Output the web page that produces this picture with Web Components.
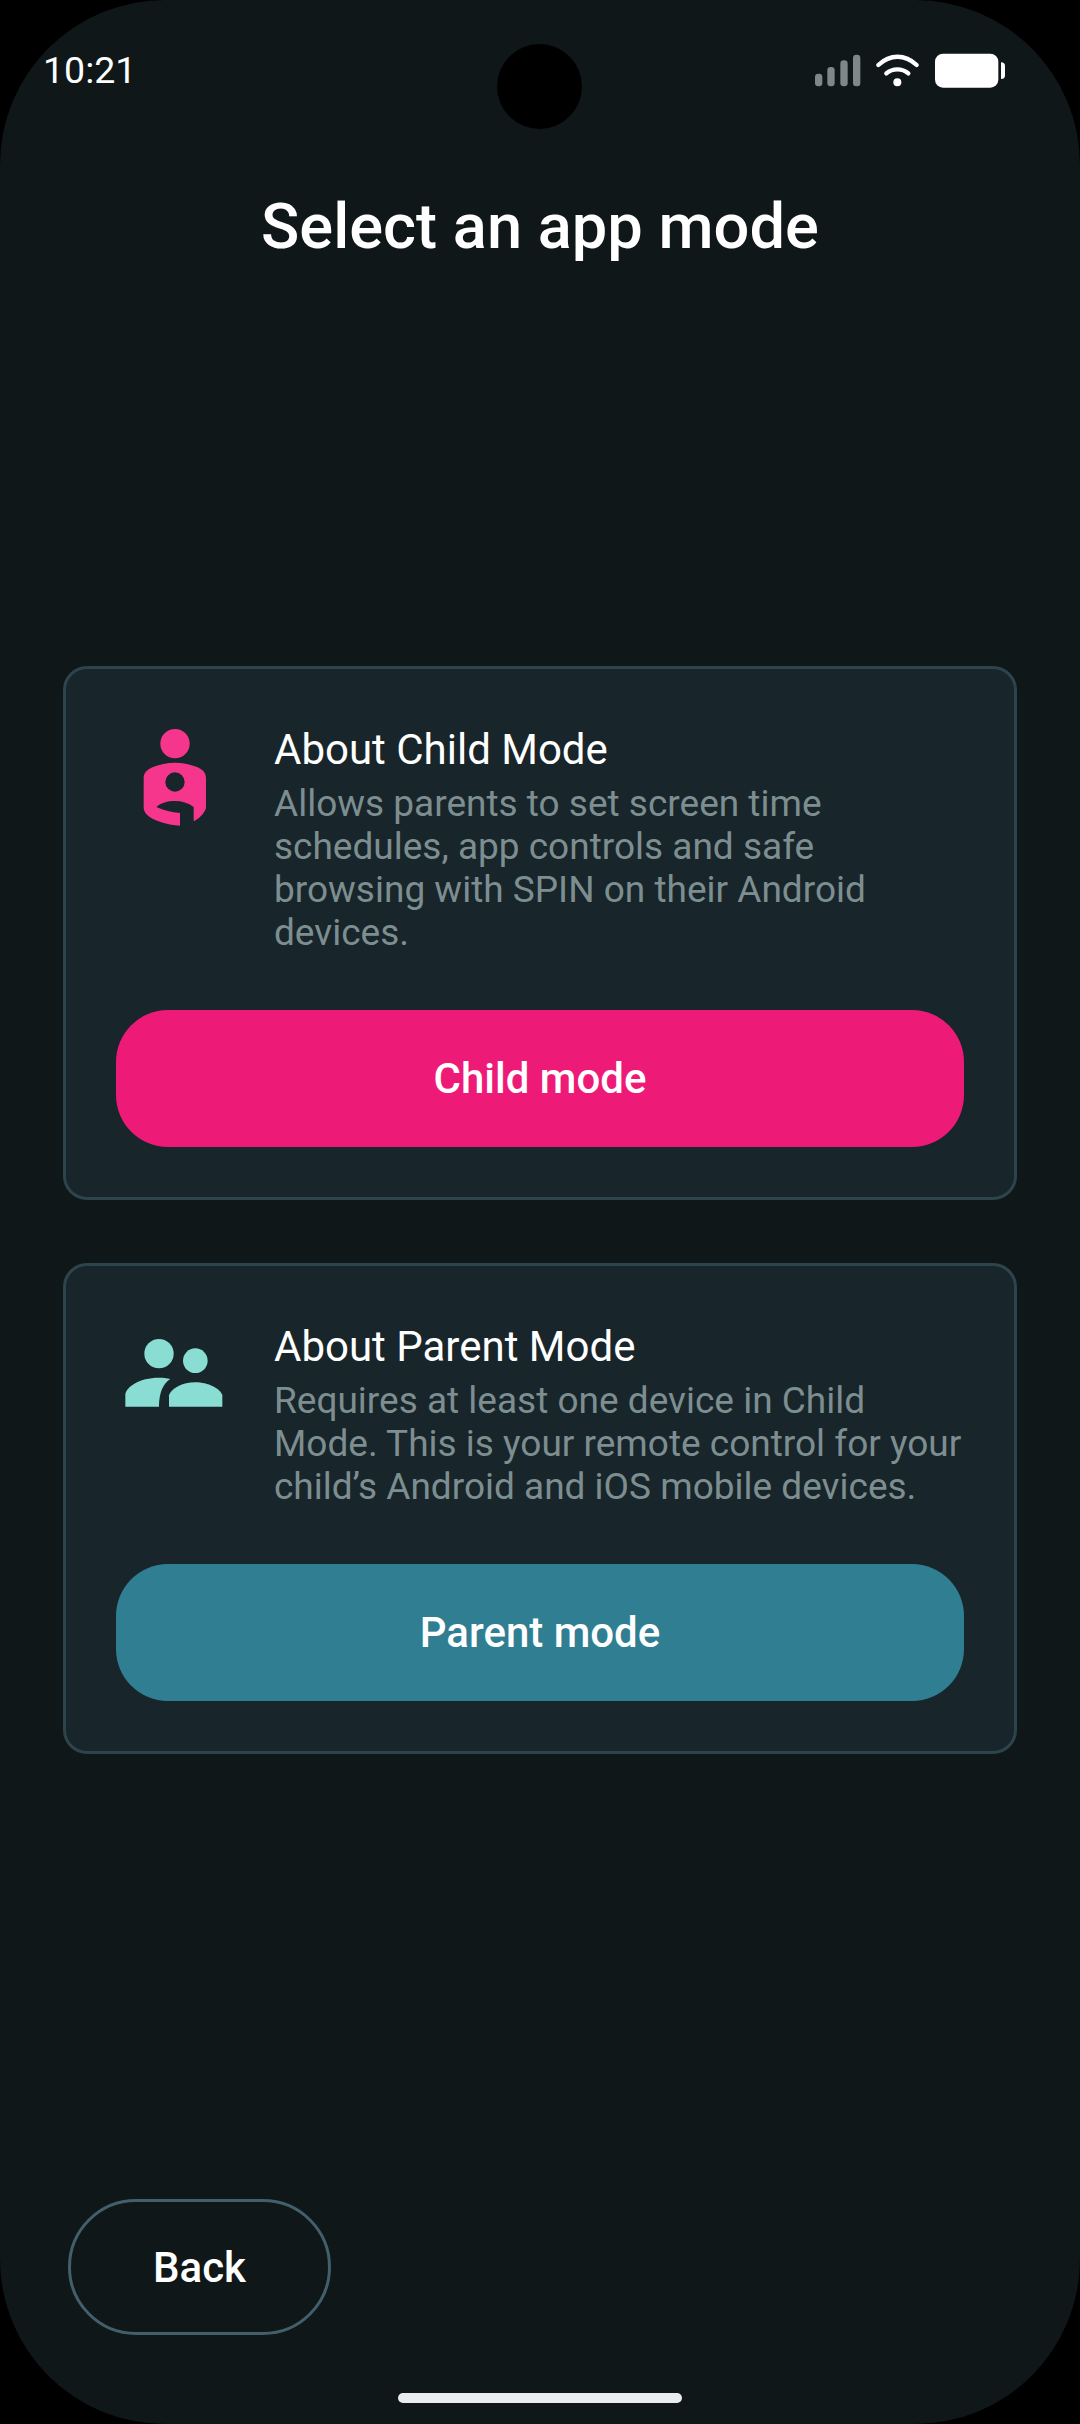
<!DOCTYPE html>
<html>
<head>
<meta charset="utf-8">
<title>Select an app mode</title>
<style>
  html, body { margin: 0; padding: 0; background: #000; }
  body { width: 1080px; height: 2424px; overflow: hidden; font-family: Roboto, "Liberation Sans", sans-serif; }
</style>
</head>
<body>
<mode-screen>
  <status-bar slot="status" time="10:21"></status-bar>
  <mode-card accent="#ee1a77" title-text="About Child Mode" action="Child mode" icon-top="2">
    <svg slot="icon" width="66.67" height="100" viewBox="270 230 200 300">
      <circle cx="372" cy="280" r="44" fill="#f5368c"/>
      <path fill="#f5368c" fill-rule="evenodd" d="M278 384 C278 366 290 358 304 351 C324 342 348 337 372 337 C396 337 420 342 440 351 C454 358 465 366 465 384 L465 474 C458 492 444 506 428 513 L428 470 C412 458 392 452 372 452 C350 452 330 458 316 470 C338 480 362 486 387 488 L387 526 C350 524 318 514 296 500 C286 492 278 484 278 470 Z M372 366 A29 29 0 1 0 372 424 A29 29 0 1 0 372 366 Z"/>
    </svg>
    Allows parents to set screen time schedules, app controls and safe browsing with SPIN on their Android devices.
  </mode-card>
  <mode-card accent="#307e92" title-text="About Parent Mode" action="Parent mode" icon-top="16">
    <svg slot="icon" width="97.33" height="68" viewBox="226 264 292 204" style="overflow:visible">
      <g fill="#8addd3">
        <circle cx="328" cy="311" r="44"/>
        <circle cx="437" cy="332" r="37"/>
        <path d="M227 470 L227 432 C232 410 268 383 328 383 C340 383 352 384 362 387 C342 400 328 425 328 470 Z"/>
        <path d="M358 470 L358 436 C364 416 398 397 437 397 C476 397 512 416 518 436 L518 470 Z"/>
      </g>
    </svg>
    Requires at least one device in Child Mode. This is your remote control for your child’s Android and iOS mobile devices.
  </mode-card>
  <back-button slot="footer">Back</back-button>
</mode-screen>

<script>
class StatusBar extends HTMLElement {
  constructor() {
    super();
    this.attachShadow({ mode: "open" });
  }

  connectedCallback() {
    this.shadowRoot.innerHTML = /* html */ `
      <style>
        :host {
          display: flex;
          justify-content: space-between;
          align-items: center;
          height: 35px;
          padding: 53px 75px 0 43px;
          position: relative;
        }
        .time { font-size: 37.5px; line-height: 35px; color: #fff; }
        .camera {
          position: absolute;
          left: 497px;
          top: 44px;
          width: 85px;
          height: 85px;
          border-radius: 50%;
          background: #000;
        }
      </style>
      <span class="time">${this.getAttribute("time")}</span>
      <div class="camera"></div>
      <svg width="190" height="35" viewBox="105 160 570 105">
        <g fill="#7f8789">
          <rect x="105" y="222" width="22" height="38" rx="10"/>
          <rect x="142" y="202" width="22" height="58" rx="10"/>
          <rect x="181" y="182" width="22" height="78" rx="10"/>
          <rect x="219" y="165" width="22" height="95" rx="10"/>
        </g>
        <g fill="none" stroke="#fff" stroke-linecap="round" stroke-width="13">
          <path d="M295 196 C330 163 375 163 410 196"/>
          <path d="M319 221 C338 205 366 205 385 221"/>
        </g>
        <circle cx="352" cy="248" r="12" fill="#fff"/>
        <rect x="465" y="162" width="190" height="102" rx="24" fill="#fff"/>
        <path d="M663 188 C671 188 675 192 675 198 L675 228 C675 234 671 238 663 238 Z" fill="#fff"/>
      </svg>
    `;
  }
}

class ModeScreen extends HTMLElement {
  constructor() {
    super();
    this.attachShadow({ mode: "open" });
  }

  connectedCallback() {
    this.shadowRoot.innerHTML = /* html */ `
      <style>
        :host {
          display: flex;
          flex-direction: column;
          box-sizing: border-box;
          width: 1080px;
          height: 2424px;
          background: #101719;
          border-radius: 165px;
          overflow: hidden;
          color: #fff;
        }
        h1 {
          margin: 103px 0 0;
          font-size: 63.2px;
          line-height: 70px;
          font-weight: 500;
          text-align: center;
        }
        .cards {
          display: flex;
          flex-direction: column;
          gap: 63px;
          margin: 405px 63px 0;
        }
        .footer { margin: 445px 0 0 68px; }
        .home {
          width: 284px;
          height: 10px;
          margin: 58px auto 0;
          border-radius: 5px;
          background: #eaeded;
        }
      </style>
      <slot name="status"></slot>
      <h1>Select an app mode</h1>
      <div class="cards"><slot></slot></div>
      <div class="footer"><slot name="footer"></slot></div>
      <div class="home"></div>
    `;
  }
}

class ModeCard extends HTMLElement {
  constructor() {
    super();
    this.attachShadow({ mode: "open" });
  }

  connectedCallback() {
    this.shadowRoot.innerHTML = /* html */ `
      <style>
        :host {
          display: block;
          box-sizing: border-box;
          background: #18252a;
          border: 3px solid #2e444c;
          border-radius: 24px;
          padding: 56px 50px 50px;
        }
        .top { display: flex; }
        .icon {
          flex: none;
          width: 116px;
          margin-right: 42px;
          padding-top: ${this.getAttribute("icon-top")}px;
          display: flex;
          justify-content: center;
          align-items: flex-start;
        }
        h2 {
          margin: 0 0 7px;
          font-size: 42px;
          line-height: 50px;
          font-weight: 400;
          color: #fff;
        }
        p {
          margin: 0;
          font-size: 37px;
          line-height: 43px;
          color: #7d8e91;
        }
        .action {
          height: 137px;
          margin-top: 56px;
          border-radius: 52px;
          display: flex;
          align-items: center;
          justify-content: center;
          font-size: 42px;
          font-weight: 500;
          color: #fff;
          background: ${this.getAttribute("accent")};
        }
      </style>
      <div class="top">
        <div class="icon"><slot name="icon"></slot></div>
        <div>
          <h2>${this.getAttribute("title-text")}</h2>
          <p><slot></slot></p>
        </div>
      </div>
      <div class="action">${this.getAttribute("action")}</div>
    `;
  }
}

class BackButton extends HTMLElement {
  constructor() {
    super();
    this.attachShadow({ mode: "open" });
  }

  connectedCallback() {
    this.shadowRoot.innerHTML = /* html */ `
      <style>
        :host {
          display: flex;
          align-items: center;
          justify-content: center;
          box-sizing: border-box;
          width: 263px;
          height: 136px;
          border: 3px solid #425f6b;
          border-radius: 68px;
          font-size: 42px;
          font-weight: 500;
          color: #fff;
        }
      </style>
      <slot></slot>
    `;
  }
}

customElements.define("status-bar", StatusBar);
customElements.define("mode-screen", ModeScreen);
customElements.define("mode-card", ModeCard);
customElements.define("back-button", BackButton);
</script>
</body>
</html>
